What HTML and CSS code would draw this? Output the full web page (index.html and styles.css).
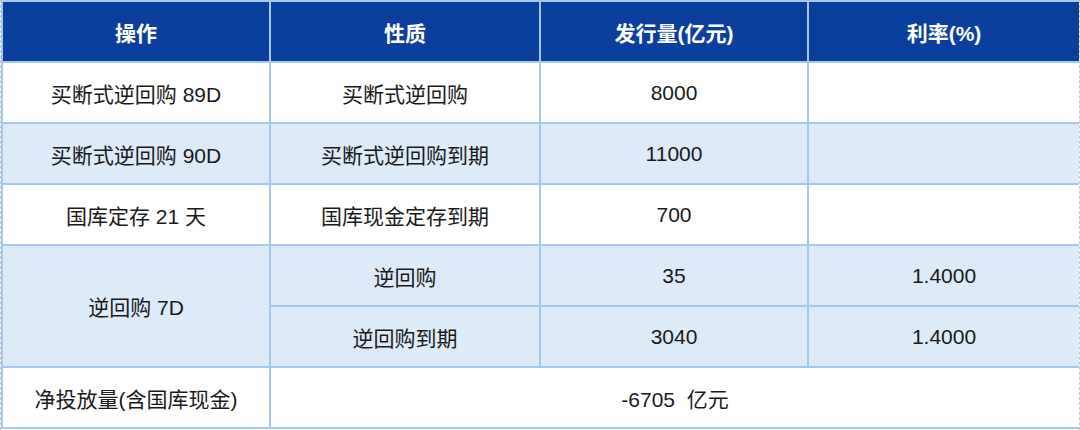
FILE: index.html
```html
<!DOCTYPE html>
<html lang="zh">
<head>
<meta charset="utf-8">
<link rel="stylesheet" href="styles.css">
</head>
<body>
<div class="frame">
<table class="grid">
  <colgroup>
    <col class="c1"><col class="c2"><col class="c3"><col class="c4">
  </colgroup>
  <thead>
    <tr><th>操作</th><th>性质</th><th>发行量(亿元)</th><th>利率(%)</th></tr>
  </thead>
  <tbody>
    <tr><td>买断式逆回购 89D</td><td>买断式逆回购</td><td>8000</td><td></td></tr>
    <tr class="alt"><td>买断式逆回购 90D</td><td>买断式逆回购到期</td><td>11000</td><td></td></tr>
    <tr><td>国库定存 21 天</td><td>国库现金定存到期</td><td>700</td><td></td></tr>
    <tr class="alt"><td rowspan="2">逆回购 7D</td><td>逆回购</td><td>35</td><td>1.4000</td></tr>
    <tr class="alt"><td>逆回购到期</td><td>3040</td><td>1.4000</td></tr>
    <tr><td>净投放量(含国库现金)</td><td colspan="3" class="pre">-6705  亿元</td></tr>
  </tbody>
</table>
</div>
</body>
</html>
```

FILE: styles.css
```css
html, body {
  margin: 0;
  padding: 0;
  background: #ffffff;
}
.frame {
  width: 1080px;
  height: 430px;
  box-sizing: border-box;
  border-left: 1px dashed #c8c8c8;
  border-right: 1px dashed #c8c8c8;
  overflow: hidden;
}
.grid {
  width: 1078px;
  border-collapse: collapse;
  table-layout: fixed;
  font-family: "Liberation Sans", "Noto Sans CJK SC", sans-serif;
  font-size: 21px;
  color: #1a1a1a;
}
.c1 { width: 268px; }
.c2 { width: 270px; }
.c3 { width: 268px; }
.c4 { width: 272px; }
.grid th, .grid td {
  border: 2px solid #a6c8ea;
  text-align: center;
  vertical-align: middle;
  padding: 0;
  height: 59px;
}
.grid th {
  background: #0b3f9d;
  color: #ffffff;
  font-weight: bold;
  height: 59px;
}
.grid tr.alt td {
  background: #ddeaf8;
}
.pre {
  white-space: pre;
}
```
